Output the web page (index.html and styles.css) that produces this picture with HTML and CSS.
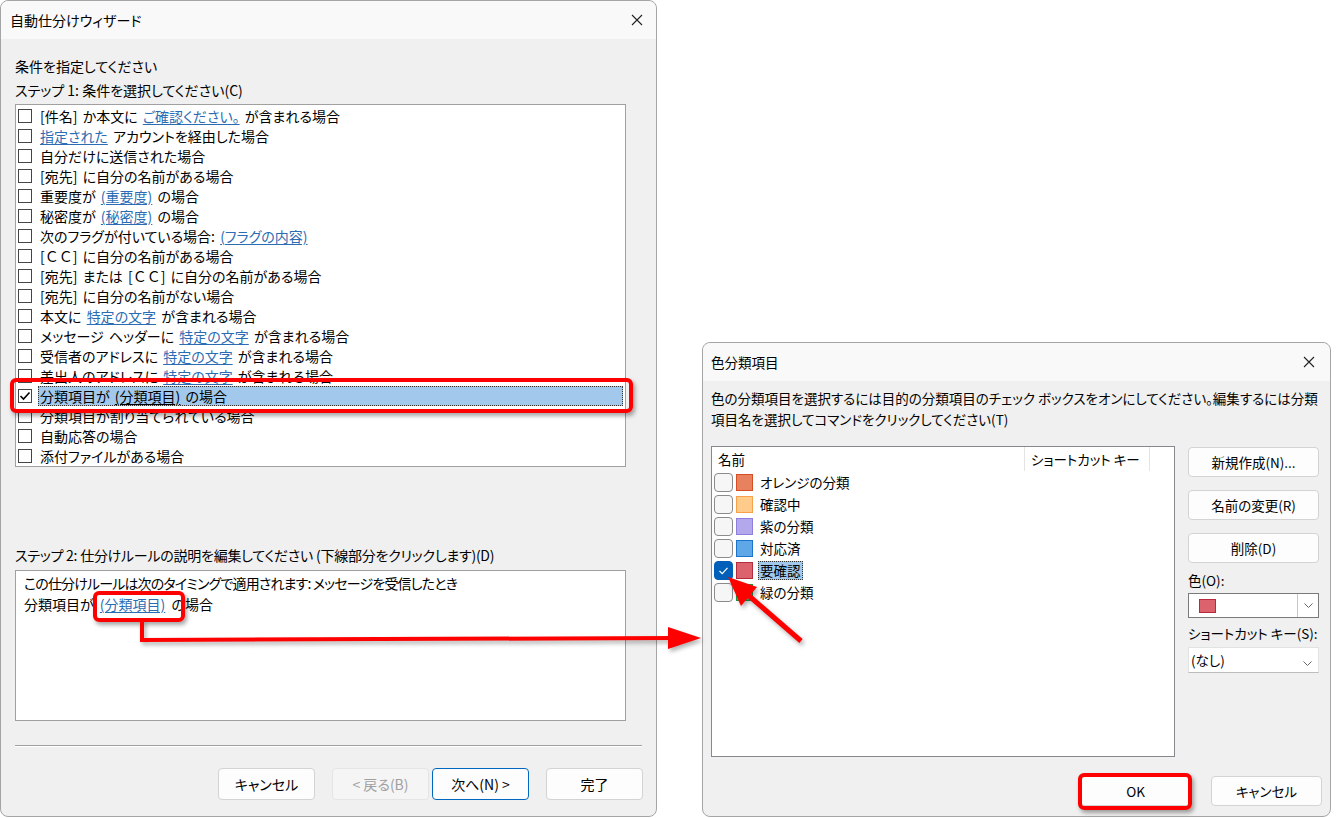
FILE: index.html
```html
<!DOCTYPE html>
<html lang="ja">
<head>
    <meta charset="UTF-8">
    <title>自動仕分けウィザード</title>
    <link rel="stylesheet" href="styles.css">
</head>
<body>
<div class="desk">

    <div class="dialog wizard">
        <div class="titlebar">
            <span class="title">自動仕分けウィザード</span>
            <svg class="close" width="12" height="12" viewBox="0 0 12 12"><path d="M1 1 L11 11 M11 1 L1 11" stroke="#222" stroke-width="1.1"/></svg>
        </div>
        <div class="wiz-body">
            <p class="label">条件を指定してください</p>
            <p class="label">ステップ 1: 条件を選択してください(C)</p>
            <ul class="cond-list">
                <li><span class="cb"></span><span class="txt">[件名] か本文に <a>ご確認ください。</a> が含まれる場合</span></li>
                <li><span class="cb"></span><span class="txt"><a>指定された</a> アカウントを経由した場合</span></li>
                <li><span class="cb"></span><span class="txt">自分だけに送信された場合</span></li>
                <li><span class="cb"></span><span class="txt">[宛先] に自分の名前がある場合</span></li>
                <li><span class="cb"></span><span class="txt">重要度が <a>(重要度)</a> の場合</span></li>
                <li><span class="cb"></span><span class="txt">秘密度が <a>(秘密度)</a> の場合</span></li>
                <li><span class="cb"></span><span class="txt">次のフラグが付いている場合: <a>(フラグの内容)</a></span></li>
                <li><span class="cb"></span><span class="txt">[<span class="wide-cc">ＣＣ</span>] に自分の名前がある場合</span></li>
                <li><span class="cb"></span><span class="txt">[宛先] または [<span class="wide-cc">ＣＣ</span>] に自分の名前がある場合</span></li>
                <li><span class="cb"></span><span class="txt">[宛先] に自分の名前がない場合</span></li>
                <li><span class="cb"></span><span class="txt">本文に <a>特定の文字</a> が含まれる場合</span></li>
                <li><span class="cb"></span><span class="txt">メッセージ ヘッダーに <a>特定の文字</a> が含まれる場合</span></li>
                <li><span class="cb"></span><span class="txt">受信者のアドレスに <a>特定の文字</a> が含まれる場合</span></li>
                <li><span class="cb"></span><span class="txt">差出人のアドレスに <a>特定の文字</a> が含まれる場合</span></li>
                <li class="selected"><span class="cb"><svg width="12" height="12" viewBox="0 0 12 12"><path d="M1.5 6 L4.5 9 L10.5 2.5" fill="none" stroke="#000" stroke-width="1.6"/></svg></span><span class="txt">分類項目が <a>(分類項目)</a> の場合</span></li>
                <li><span class="cb"></span><span class="txt">分類項目が割り当てられている場合</span></li>
                <li><span class="cb"></span><span class="txt">自動応答の場合</span></li>
                <li><span class="cb"></span><span class="txt">添付ファイルがある場合</span></li>
            </ul>
            <p class="label step2">ステップ 2: 仕分けルールの説明を編集してください (下線部分をクリックします)(D)</p>
            <div class="desc-box">
                <p class="desc-first">この仕分けルールは次のタイミングで適用されます: メッセージを受信したとき</p>
                <p class="desc-rule">分類項目が <a>(分類項目)</a> の場合</p>
            </div>
            <div class="sep"></div>
            <div class="btn-row">
                <button class="btn">キャンセル</button>
                <button class="btn back" disabled>&lt; 戻る(B)</button>
                <button class="btn next">次へ(N) &gt;</button>
                <button class="btn finish">完了</button>
            </div>
        </div>
    </div>

    <div class="dialog category">
        <div class="titlebar">
            <span class="title">色分類項目</span>
            <svg class="close" width="12" height="12" viewBox="0 0 12 12"><path d="M1 1 L11 11 M11 1 L1 11" stroke="#222" stroke-width="1.1"/></svg>
        </div>
        <div class="cat-body">
            <p class="cat-desc">色の分類項目を選択するには目的の分類項目のチェック ボックスをオンにしてください。編集するには分類<br>項目名を選択してコマンドをクリックしてください(T)</p>
            <div class="cat-main">
                <div class="cat-list">
                    <div class="cat-head">
                        <span class="col-name">名前</span>
                        <span class="col-key">ショートカット キー</span>
                    </div>
                    <div class="cat-row"><span class="rcb"></span><span class="swatch orange"></span><span class="name">オレンジの分類</span></div>
                    <div class="cat-row"><span class="rcb"></span><span class="swatch peach"></span><span class="name">確認中</span></div>
                    <div class="cat-row"><span class="rcb"></span><span class="swatch purple"></span><span class="name">紫の分類</span></div>
                    <div class="cat-row"><span class="rcb"></span><span class="swatch blue"></span><span class="name">対応済</span></div>
                    <div class="cat-row active"><span class="rcb checked"><svg width="17" height="17" viewBox="0 0 17 17"><path d="M4.5 9 L7.2 11.6 L12.5 5.8" fill="none" stroke="#fff" stroke-width="1.2"/></svg></span><span class="swatch red"></span><span class="name">要確認</span></div>
                    <div class="cat-row"><span class="rcb"></span><span class="swatch green"></span><span class="name">緑の分類</span></div>
                </div>
                <div class="cat-side">
                    <button class="btn side">新規作成(N)...</button>
                    <button class="btn side">名前の変更(R)</button>
                    <button class="btn side">削除(D)</button>
                    <p class="field-label">色(O):</p>
                    <div class="combo color-combo">
                        <span class="combo-val"><span class="mini-swatch"></span></span>
                        <span class="drop"><svg width="9" height="5" viewBox="0 0 9 5"><path d="M0.5 0.5 L4.5 4.5 L8.5 0.5" fill="none" stroke="#666" stroke-width="1"/></svg></span>
                    </div>
                    <p class="field-label">ショートカット キー(S):</p>
                    <div class="combo key-combo">
                        <span class="combo-val">(なし)</span>
                        <span class="drop"><svg width="9" height="5" viewBox="0 0 9 5"><path d="M0.5 0.5 L4.5 4.5 L8.5 0.5" fill="none" stroke="#666" stroke-width="1"/></svg></span>
                    </div>
                </div>
            </div>
            <div class="cat-buttons">
                <button class="btn wide">OK</button>
                <button class="btn wide">キャンセル</button>
            </div>
        </div>
    </div>

    <!-- annotations -->
    <div class="mark mark-row"></div>
    <div class="mark mark-link"></div>
    <div class="mark mark-ok"></div>
    <svg class="arrows" width="1344" height="818" viewBox="0 0 1344 818">
        <g class="arrow-shape">
            <polyline points="142,620 142,640 674,638" fill="none" stroke="#ff0000" stroke-width="4"/>
            <polygon points="668,627 701,638 668,649" fill="#ff0000"/>
            <line x1="801" y1="641" x2="748" y2="595" stroke="#ff0000" stroke-width="5"/>
            <polygon points="728,577 757,587 741,606" fill="#ff0000"/>
        </g>
    </svg>
</div>
</body>
</html>
```

FILE: styles.css
```css
* {
    box-sizing: border-box;
}
body {
    margin: 0;
    background: #fff;
    font-family: "Noto Sans CJK JP", "Noto Sans", sans-serif;
    font-size: 14px;
    font-feature-settings: "palt";
    color: #000;
}
p {
    margin: 0;
}
a {
    color: #2b6cb3;
    text-decoration: underline;
    text-underline-offset: 2px;
}
.desk {
    position: relative;
    width: 1344px;
    height: 818px;
    overflow: hidden;
}

/* windows */
.dialog {
    position: absolute;
    background: #f0f0f0;
    border: 1px solid #a5a5a5;
    border-radius: 8px;
}
.titlebar {
    height: 38px;
    display: flex;
    align-items: center;
    justify-content: space-between;
    background: #f9f9f9;
    border-radius: 8px 8px 0 0;
}
.btn {
    font-family: inherit;
    font-size: inherit;
    font-feature-settings: "palt";
    color: #000;
    background: #fdfdfd;
    border: 1px solid #d3d3d3;
    border-radius: 4px;
    padding: 0;
}

/* wizard */
.wizard {
    left: 0;
    top: 0;
    width: 657px;
    height: 817px;
}
.wizard .titlebar {
    padding: 0 13px 0 9px;
}
.wiz-body {
    padding: 15px 14px 0 14px;
}
.label {
    line-height: 24px;
}
.cond-list {
    list-style: none;
    margin: 2px 0 0;
    padding: 1px 0 0 2px;
    width: 611px;
    height: 363px;
    background: #fff;
    border: 1px solid #a0a0a0;
}
.cond-list li {
    height: 20px;
    display: flex;
    align-items: center;
}
.cb {
    width: 14px;
    height: 14px;
    border: 1px solid #444;
    background: #fff;
    display: flex;
    align-items: center;
    justify-content: center;
}
.txt {
    margin-left: 6px;
    padding-left: 2px;
    line-height: 20px;
    white-space: nowrap;
    word-spacing: 2px;
}
.wide-cc {
    font-feature-settings: normal;
}
.selected .txt {
    flex: 1;
    margin-right: 2px;
    background: #a2c8ec;
    outline: 1px dotted #333;
    outline-offset: -1px;
}
.selected a {
    color: #000;
}
.step2 {
    margin-top: 76px;
    line-height: 24px;
    letter-spacing: -0.25px;
}
.desc-box {
    margin-top: 3px;
    width: 611px;
    height: 151px;
    background: #fff;
    border: 1px solid #a0a0a0;
    padding: 2px 8px;
    line-height: 21px;
}
.desc-first {
    letter-spacing: -0.85px;
}
.desc-rule {
    word-spacing: 3px;
}
.sep {
    margin-top: 24px;
    height: 2px;
    border-top: 1px solid #a0a0a0;
    border-bottom: 1px solid #fff;
}
.btn-row {
    display: flex;
    justify-content: flex-end;
    margin-top: 21px;
}
.btn-row .btn {
    width: 97px;
    height: 32px;
}
.btn-row .back {
    margin-left: 17px;
    background: #f5f5f5;
    border-color: #e5e5e5;
    color: #a0a0a0;
}
.btn-row .next {
    margin-left: 3px;
    border-color: #0067c0;
}
.btn-row .finish {
    margin-left: 17px;
    margin-right: -1px;
}

/* category dialog */
.category {
    left: 702px;
    top: 342px;
    width: 629px;
    height: 475px;
    font-size: 13.5px;
}
.category .titlebar {
    padding: 0 15px 0 8px;
}
.cat-body {
    padding: 0 8px;
}
.cat-desc {
    margin-top: 7px;
    line-height: 21px;
    white-space: nowrap;
}
.cat-main {
    display: flex;
    margin-top: 16px;
}
.cat-list {
    width: 464px;
    height: 311px;
    background: #fff;
    border: 1px solid #85888e;
}
.cat-head {
    display: flex;
    height: 24px;
    align-items: center;
}
.col-name {
    width: 313px;
    padding-left: 6px;
    border-right: 1px solid #e3e3e3;
    height: 24px;
    line-height: 24px;
}
.col-key {
    width: 125px;
    padding-left: 6px;
    border-right: 1px solid #e3e3e3;
    height: 24px;
    line-height: 24px;
}
.cat-row {
    height: 22px;
    display: flex;
    align-items: center;
    padding-left: 2px;
}
.rcb {
    width: 19px;
    height: 19px;
    border: 1px solid #8b8b8b;
    border-radius: 4px;
    background: #f6f6f6;
    display: flex;
    align-items: center;
    justify-content: center;
}
.rcb.checked {
    background: #005fb8;
    border-color: #005fb8;
}
.swatch {
    width: 17px;
    height: 17px;
    margin-left: 3px;
    border: 1px solid;
}
.orange { background: #e8825e; border-color: #d54d22; }
.peach { background: #ffcb8b; border-color: #f7a14a; }
.purple { background: #b4a8ec; border-color: #8f7fdd; }
.blue { background: #5fa8e8; border-color: #1b74c9; }
.red { background: #dc626d; border-color: #b52a3c; }
.green { background: #4cbf6e; border-color: #1b9d47; }
.name {
    margin-left: 5px;
    padding: 0 2px;
    line-height: 19px;
}
.active .name {
    background: #a2c8ec;
    outline: 1px dotted #333;
    outline-offset: -1px;
}
.cat-side {
    margin-left: 13px;
    width: 131px;
    display: flex;
    flex-direction: column;
}
.btn.side {
    height: 30px;
    margin-bottom: 13px;
}
.btn.side:first-child {
    margin-top: 1px;
}
.btn.side:nth-child(3) {
    margin-bottom: 7px;
}
.field-label {
    line-height: 20px;
    margin-bottom: 3px;
    white-space: nowrap;
}
.combo {
    display: flex;
    align-items: center;
    justify-content: space-between;
    background: #fff;
    margin-bottom: 5px;
}
.color-combo {
    height: 25px;
    border: 1px solid #7a7a7a;
}
.color-combo .drop {
    width: 21px;
    height: 23px;
    border-left: 1px solid #c8c8c8;
    display: flex;
    align-items: center;
    justify-content: center;
}
.mini-swatch {
    display: block;
    margin-left: 10px;
    width: 17px;
    height: 14px;
    background: #dc626d;
    border: 1px solid #b52a3c;
}
.key-combo {
    height: 26px;
    border: 1px solid #e2e2e2;
    border-bottom-color: #bdbdbd;
    padding: 0 6px 0 2px;
    margin-top: 1px;
}
.cat-buttons {
    display: flex;
    justify-content: flex-end;
    gap: 20px;
    margin-top: 19px;
}
.btn.wide {
    width: 111px;
    height: 30px;
}

/* annotations */
.mark {
    position: absolute;
    border: 4px solid #ff0000;
    border-radius: 6px;
    box-shadow: 2px 3px 4px rgba(0, 0, 0, 0.35);
}
.mark-row {
    left: 10px;
    top: 378px;
    width: 623px;
    height: 35px;
}
.mark-link {
    left: 93px;
    top: 591px;
    width: 92px;
    height: 31px;
}
.mark-ok {
    left: 1078px;
    top: 773px;
    width: 114px;
    height: 37px;
}
.arrows {
    position: absolute;
    left: 0;
    top: 0;
    pointer-events: none;
}
.arrow-shape {
    filter: drop-shadow(2px 3px 2px rgba(0, 0, 0, 0.3));
}
```
